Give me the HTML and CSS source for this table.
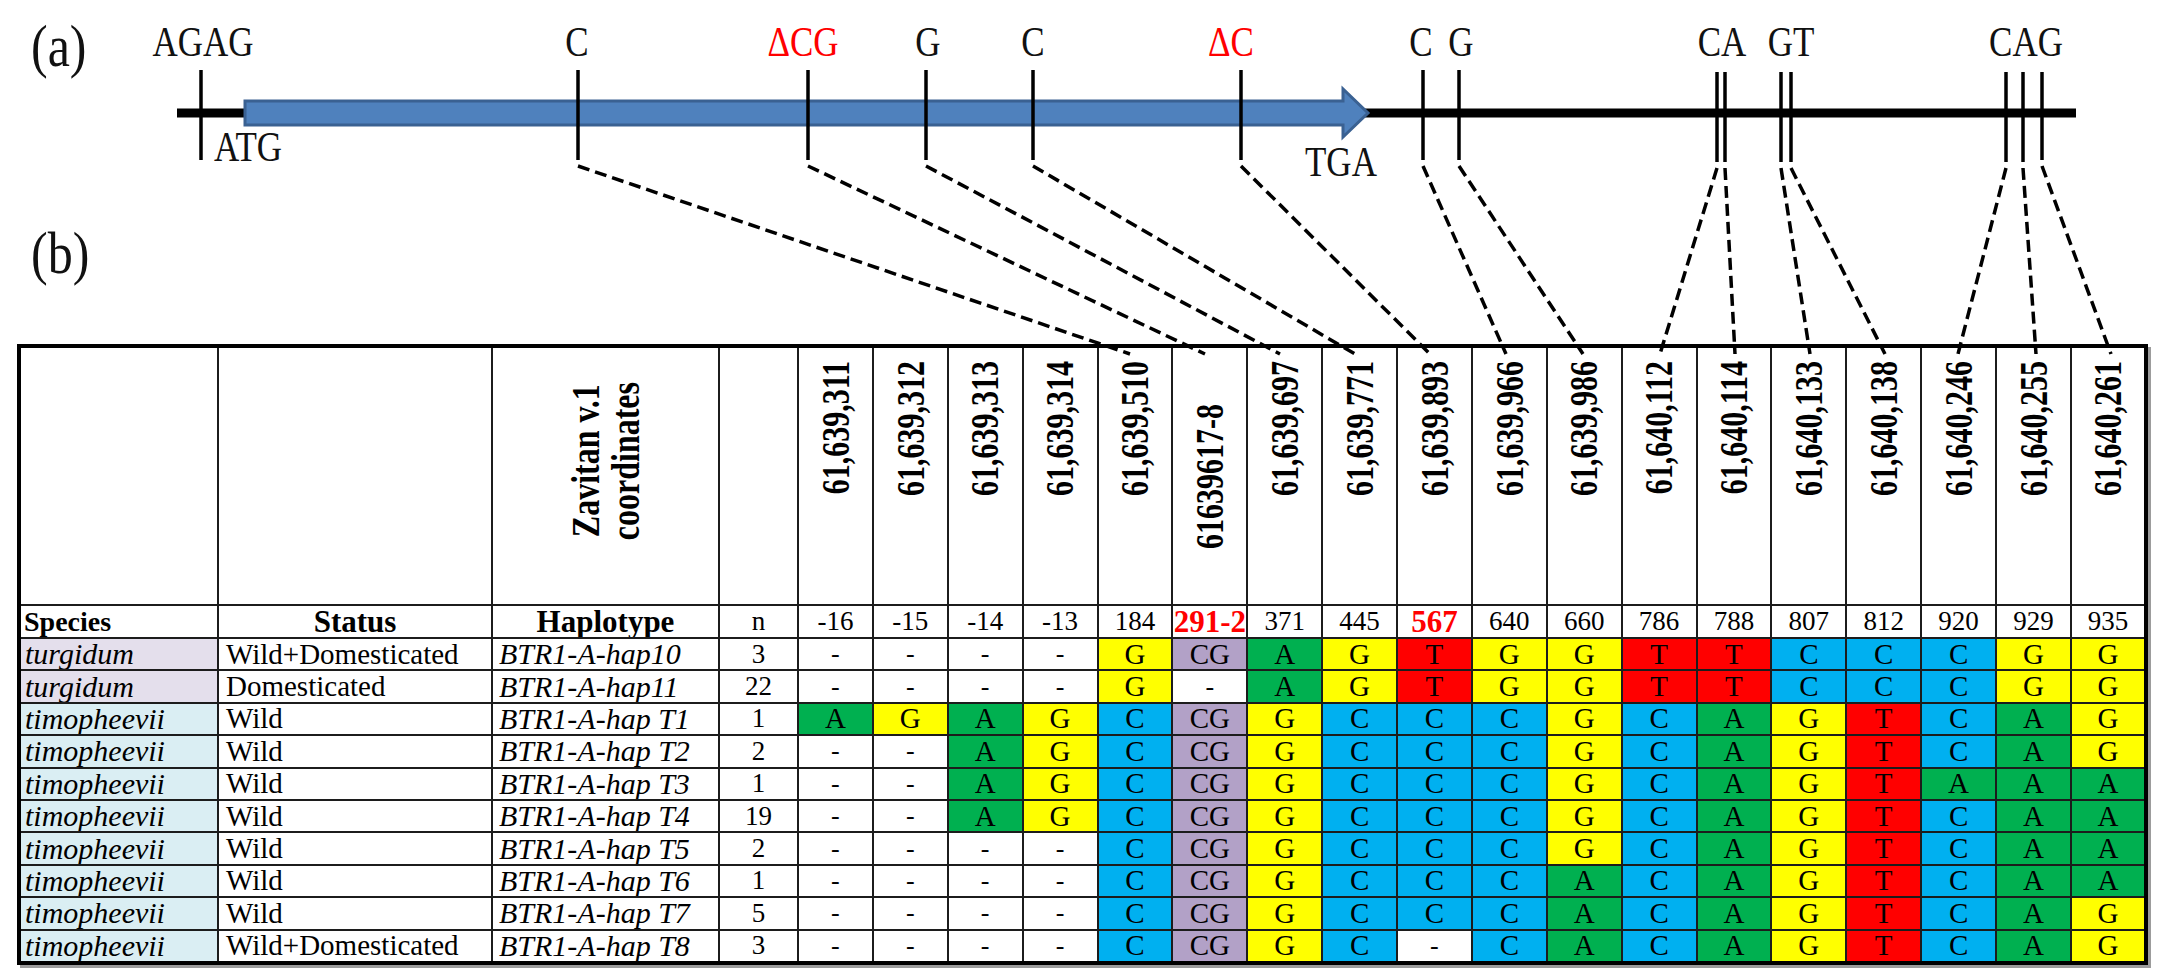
FILE: index.html
```html
<!DOCTYPE html>
<html lang="en">
<head>
<meta charset="utf-8">
<title>BTR1-A haplotypes</title>
<link rel="stylesheet" href="styles.css">
</head>
<body>
<div class="figure">
  <svg class="panel-a" width="2168" height="344" viewBox="0 0 2168 344">
    <text class="panel-label" x="31" y="63">(a)</text>
    <text class="panel-label" x="31" y="270">(b)</text>
    <line class="axis" x1="177" y1="113" x2="2076" y2="113"/>
    <path class="gene" d="M245 101 H1343 V89 L1368 113 L1343 137 V125 H245 Z"/>
    <g class="ticks">
      <line x1="201" y1="70" x2="201" y2="160"/>
      <line x1="578" y1="70" x2="578" y2="160"/>
      <line x1="808" y1="70" x2="808" y2="160"/>
      <line x1="926" y1="70" x2="926" y2="160"/>
      <line x1="1033" y1="70" x2="1033" y2="160"/>
      <line x1="1241" y1="70" x2="1241" y2="160"/>
      <line x1="1423" y1="70" x2="1423" y2="160"/>
      <line x1="1459" y1="70" x2="1459" y2="160"/>
      <line x1="1717" y1="72" x2="1717" y2="162"/>
      <line x1="1725" y1="72" x2="1725" y2="162"/>
      <line x1="1781" y1="72" x2="1781" y2="162"/>
      <line x1="1791" y1="72" x2="1791" y2="162"/>
      <line x1="2006" y1="72" x2="2006" y2="162"/>
      <line x1="2023" y1="72" x2="2023" y2="162"/>
      <line x1="2042" y1="72" x2="2042" y2="160"/>
    </g>
    <g class="marks">
      <text x="203" y="57">AGAG</text>
      <text x="577" y="57">C</text>
      <text class="del" x="803" y="57">ΔCG</text>
      <text x="928" y="57">G</text>
      <text x="1033" y="57">C</text>
      <text class="del" x="1231" y="57">ΔC</text>
      <text x="1421" y="57">C</text>
      <text x="1461" y="57">G</text>
      <text x="1722" y="57">CA</text>
      <text x="1791" y="57">GT</text>
      <text x="2026" y="57">CAG</text>
      <text class="start" x="214" y="162">ATG</text>
      <text class="start" x="1305" y="177">TGA</text>
    </g>
    <g class="links">
      <line x1="578" y1="166" x2="1130" y2="354"/>
      <line x1="808" y1="166" x2="1205" y2="354"/>
      <line x1="926" y1="166" x2="1280" y2="354"/>
      <line x1="1033" y1="166" x2="1355" y2="354"/>
      <line x1="1241" y1="166" x2="1430" y2="354"/>
      <line x1="1423" y1="166" x2="1506" y2="354"/>
      <line x1="1459" y1="166" x2="1583" y2="354"/>
      <line x1="1717" y1="168" x2="1660" y2="354"/>
      <line x1="1725" y1="168" x2="1735" y2="354"/>
      <line x1="1781" y1="168" x2="1810" y2="354"/>
      <line x1="1791" y1="168" x2="1885" y2="354"/>
      <line x1="2006" y1="168" x2="1958" y2="354"/>
      <line x1="2023" y1="168" x2="2036" y2="354"/>
      <line x1="2042" y1="166" x2="2111" y2="354"/>
    </g>
  </svg>

  <table class="haplo">
    <colgroup>
      <col class="col-sp"><col class="col-st"><col class="col-hp"><col class="col-n">
      <col><col><col><col><col><col><col><col><col><col><col><col><col><col><col><col><col><col>
    </colgroup>
    <thead>
      <tr class="head-row">
        <th></th>
        <th></th>
        <th class="coord"><div class="vh mid"><span class="rot two">Zavitan v.1<br>coordinates</span></div></th>
        <th></th>
        <th class="coord"><div class="vh"><span class="rot num">61,639,311</span></div></th>
        <th class="coord"><div class="vh"><span class="rot num">61,639,312</span></div></th>
        <th class="coord"><div class="vh"><span class="rot num">61,639,313</span></div></th>
        <th class="coord"><div class="vh"><span class="rot num">61,639,314</span></div></th>
        <th class="coord"><div class="vh"><span class="rot num">61,639,510</span></div></th>
        <th class="coord"><div class="vh center"><span class="rot num">61639617-8</span></div></th>
        <th class="coord"><div class="vh"><span class="rot num">61,639,697</span></div></th>
        <th class="coord"><div class="vh"><span class="rot num">61,639,771</span></div></th>
        <th class="coord"><div class="vh"><span class="rot num">61,639,893</span></div></th>
        <th class="coord"><div class="vh"><span class="rot num">61,639,966</span></div></th>
        <th class="coord"><div class="vh"><span class="rot num">61,639,986</span></div></th>
        <th class="coord"><div class="vh"><span class="rot num">61,640,112</span></div></th>
        <th class="coord"><div class="vh"><span class="rot num">61,640,114</span></div></th>
        <th class="coord"><div class="vh"><span class="rot num">61,640,133</span></div></th>
        <th class="coord"><div class="vh"><span class="rot num">61,640,138</span></div></th>
        <th class="coord"><div class="vh"><span class="rot num">61,640,246</span></div></th>
        <th class="coord"><div class="vh"><span class="rot num">61,640,255</span></div></th>
        <th class="coord"><div class="vh"><span class="rot num">61,640,261</span></div></th>
      </tr>
      <tr class="label-row">
        <th class="lbl left">Species</th>
        <th class="lbl">Status</th>
        <th class="lbl">Haplotype</th>
        <th class="pos">n</th>
        <th class="pos">-16</th>
        <th class="pos">-15</th>
        <th class="pos">-14</th>
        <th class="pos">-13</th>
        <th class="pos">184</th>
        <th class="pos hot">291-2</th>
        <th class="pos">371</th>
        <th class="pos">445</th>
        <th class="pos hot">567</th>
        <th class="pos">640</th>
        <th class="pos">660</th>
        <th class="pos">786</th>
        <th class="pos">788</th>
        <th class="pos">807</th>
        <th class="pos">812</th>
        <th class="pos">920</th>
        <th class="pos">929</th>
        <th class="pos">935</th>
      </tr>
    </thead>
    <tbody>
      <tr>
        <td class="sp tu">turgidum</td><td class="st">Wild+Domesticated</td><td class="hp">BTR1-A-hap10</td><td class="n">3</td>
        <td class="dash">-</td><td class="dash">-</td><td class="dash">-</td><td class="dash">-</td>
        <td class="y">G</td><td class="p">CG</td><td class="g">A</td><td class="y">G</td><td class="r">T</td><td class="y">G</td><td class="y">G</td><td class="r">T</td><td class="r">T</td><td class="b">C</td><td class="b">C</td><td class="b">C</td><td class="y">G</td><td class="y">G</td>
      </tr>
      <tr>
        <td class="sp tu">turgidum</td><td class="st">Domesticated</td><td class="hp">BTR1-A-hap11</td><td class="n">22</td>
        <td class="dash">-</td><td class="dash">-</td><td class="dash">-</td><td class="dash">-</td>
        <td class="y">G</td><td class="dash">-</td><td class="g">A</td><td class="y">G</td><td class="r">T</td><td class="y">G</td><td class="y">G</td><td class="r">T</td><td class="r">T</td><td class="b">C</td><td class="b">C</td><td class="b">C</td><td class="y">G</td><td class="y">G</td>
      </tr>
      <tr>
        <td class="sp ti">timopheevii</td><td class="st">Wild</td><td class="hp">BTR1-A-hap T1</td><td class="n">1</td>
        <td class="g">A</td><td class="y">G</td><td class="g">A</td><td class="y">G</td>
        <td class="b">C</td><td class="p">CG</td><td class="y">G</td><td class="b">C</td><td class="b">C</td><td class="b">C</td><td class="y">G</td><td class="b">C</td><td class="g">A</td><td class="y">G</td><td class="r">T</td><td class="b">C</td><td class="g">A</td><td class="y">G</td>
      </tr>
      <tr>
        <td class="sp ti">timopheevii</td><td class="st">Wild</td><td class="hp">BTR1-A-hap T2</td><td class="n">2</td>
        <td class="dash">-</td><td class="dash">-</td><td class="g">A</td><td class="y">G</td>
        <td class="b">C</td><td class="p">CG</td><td class="y">G</td><td class="b">C</td><td class="b">C</td><td class="b">C</td><td class="y">G</td><td class="b">C</td><td class="g">A</td><td class="y">G</td><td class="r">T</td><td class="b">C</td><td class="g">A</td><td class="y">G</td>
      </tr>
      <tr>
        <td class="sp ti">timopheevii</td><td class="st">Wild</td><td class="hp">BTR1-A-hap T3</td><td class="n">1</td>
        <td class="dash">-</td><td class="dash">-</td><td class="g">A</td><td class="y">G</td>
        <td class="b">C</td><td class="p">CG</td><td class="y">G</td><td class="b">C</td><td class="b">C</td><td class="b">C</td><td class="y">G</td><td class="b">C</td><td class="g">A</td><td class="y">G</td><td class="r">T</td><td class="g">A</td><td class="g">A</td><td class="g">A</td>
      </tr>
      <tr>
        <td class="sp ti">timopheevii</td><td class="st">Wild</td><td class="hp">BTR1-A-hap T4</td><td class="n">19</td>
        <td class="dash">-</td><td class="dash">-</td><td class="g">A</td><td class="y">G</td>
        <td class="b">C</td><td class="p">CG</td><td class="y">G</td><td class="b">C</td><td class="b">C</td><td class="b">C</td><td class="y">G</td><td class="b">C</td><td class="g">A</td><td class="y">G</td><td class="r">T</td><td class="b">C</td><td class="g">A</td><td class="g">A</td>
      </tr>
      <tr>
        <td class="sp ti">timopheevii</td><td class="st">Wild</td><td class="hp">BTR1-A-hap T5</td><td class="n">2</td>
        <td class="dash">-</td><td class="dash">-</td><td class="dash">-</td><td class="dash">-</td>
        <td class="b">C</td><td class="p">CG</td><td class="y">G</td><td class="b">C</td><td class="b">C</td><td class="b">C</td><td class="y">G</td><td class="b">C</td><td class="g">A</td><td class="y">G</td><td class="r">T</td><td class="b">C</td><td class="g">A</td><td class="g">A</td>
      </tr>
      <tr>
        <td class="sp ti">timopheevii</td><td class="st">Wild</td><td class="hp">BTR1-A-hap T6</td><td class="n">1</td>
        <td class="dash">-</td><td class="dash">-</td><td class="dash">-</td><td class="dash">-</td>
        <td class="b">C</td><td class="p">CG</td><td class="y">G</td><td class="b">C</td><td class="b">C</td><td class="b">C</td><td class="g">A</td><td class="b">C</td><td class="g">A</td><td class="y">G</td><td class="r">T</td><td class="b">C</td><td class="g">A</td><td class="g">A</td>
      </tr>
      <tr>
        <td class="sp ti">timopheevii</td><td class="st">Wild</td><td class="hp">BTR1-A-hap T7</td><td class="n">5</td>
        <td class="dash">-</td><td class="dash">-</td><td class="dash">-</td><td class="dash">-</td>
        <td class="b">C</td><td class="p">CG</td><td class="y">G</td><td class="b">C</td><td class="b">C</td><td class="b">C</td><td class="g">A</td><td class="b">C</td><td class="g">A</td><td class="y">G</td><td class="r">T</td><td class="b">C</td><td class="g">A</td><td class="y">G</td>
      </tr>
      <tr>
        <td class="sp ti">timopheevii</td><td class="st">Wild+Domesticated</td><td class="hp">BTR1-A-hap T8</td><td class="n">3</td>
        <td class="dash">-</td><td class="dash">-</td><td class="dash">-</td><td class="dash">-</td>
        <td class="b">C</td><td class="p">CG</td><td class="y">G</td><td class="b">C</td><td class="dash">-</td><td class="b">C</td><td class="g">A</td><td class="b">C</td><td class="g">A</td><td class="y">G</td><td class="r">T</td><td class="b">C</td><td class="g">A</td><td class="y">G</td>
      </tr>
    </tbody>
  </table>
</div>
</body>
</html>
```

FILE: styles.css
```css
* { box-sizing: border-box; }

html, body {
  margin: 0;
  padding: 0;
  background: #ffffff;
}

body {
  font-family: "Liberation Serif", "Times New Roman", serif;
  color: #000;
}

.figure {
  width: 2168px;
  height: 978px;
  overflow: hidden;
}

/* ---------- panel (a) diagram ---------- */
.panel-a {
  display: block;
  position: relative;
  z-index: 1;
  overflow: visible;
}

.panel-label {
  font-family: "Liberation Serif", serif;
  font-size: 50px;
  fill: #111;
  transform-box: fill-box;
  transform-origin: 50% 50%;
  transform: scaleY(1.2);
}

.axis {
  stroke: #000;
  stroke-width: 9;
}

.gene {
  fill: #4f81bd;
  stroke: #3a6192;
  stroke-width: 3;
}

.ticks line {
  stroke: #000;
  stroke-width: 3.5;
}

.marks text {
  font-family: "Liberation Serif", serif;
  font-size: 35px;
  text-anchor: middle;
  fill: #111;
  transform-box: fill-box;
  transform-origin: 50% 100%;
  transform: scaleY(1.18);
}

.marks text.del { fill: #ff0000; }
.marks text.start { text-anchor: start; }

.links line {
  stroke: #000;
  stroke-width: 3.5;
  stroke-dasharray: 12 6;
  fill: none;
}

/* ---------- panel (b) table ---------- */
.haplo {
  margin-left: 17px;
  width: 2131px;
  table-layout: fixed;
  border-collapse: collapse;
  border: 4px solid #000;
  box-shadow: 3px 3px 0 #9c9c9c;
  font-size: 29px;
  line-height: 1;
}

.col-sp { width: 199px; }
.col-st { width: 274px; }
.col-hp { width: 227px; }
.col-n  { width: 79px; }

.haplo th,
.haplo td {
  border: 2px solid #1c1c1c;
  padding: 0;
  text-align: center;
  vertical-align: middle;
  font-weight: normal;
  white-space: nowrap;
  overflow: hidden;
}

.head-row th {
  height: 258px;
  background: transparent;
}

.haplo th.coord {
  vertical-align: top;
}

.vh {
  height: 256px;
  display: flex;
  flex-direction: column;
  align-items: center;
  justify-content: flex-start;
  padding-top: 13px;
}

.vh.center {
  justify-content: center;
  padding-top: 0;
}

.vh.mid {
  justify-content: center;
  padding-top: 0;
  padding-bottom: 30px;
}

.rot {
  display: block;
  writing-mode: vertical-rl;
  transform: rotate(180deg);
  font-weight: bold;
  font-size: 31px;
  line-height: 1.05;
  text-align: center;
  white-space: nowrap;
}

.rot.num {
  font-size: 30px;
  transform: rotate(180deg) scaleX(1.3);
}

.rot.two {
  font-size: 32px;
  line-height: 1.02;
  transform: rotate(180deg) scaleX(1.25);
}

.label-row th { height: 32px; }

.haplo th.lbl {
  font-weight: bold;
  font-size: 31px;
}

.haplo th.lbl.left {
  text-align: left;
  padding-left: 3px;
  font-size: 28px;
}

.pos { font-size: 27px; }

.haplo th.pos.hot {
  color: #ff0000;
  font-weight: bold;
  font-size: 31px;
}

.haplo tbody td { height: 32.4px; }

.haplo td.sp,
.haplo td.st,
.haplo td.hp {
  text-align: left;
  font-size: 29px;
}

.haplo td.sp { padding-left: 4px; font-style: italic; font-size: 30px; }
.haplo td.st { padding-left: 7px; }
.haplo td.hp { padding-left: 6px; font-style: italic; font-size: 30px; }

.sp.tu { background: #e4dfec; }
.sp.ti { background: #daeef3; }

.haplo td.n { font-size: 27px; }
.haplo td.dash { font-size: 26px; }

.y { background: #ffff00; }
.g { background: #00b050; }
.r { background: #ff0000; }
.b { background: #00b0f0; }
.p { background: #b2a1c7; }
```
